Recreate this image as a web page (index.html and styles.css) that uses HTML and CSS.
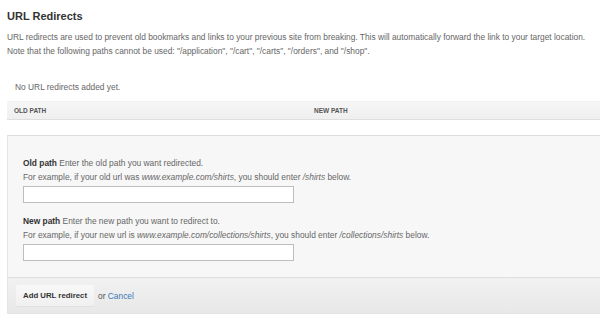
FILE: index.html
```html
<!DOCTYPE html>
<html lang="en">

<head>
  <meta charset="UTF-8">
  <title>URL Redirects</title>
  <link rel="stylesheet" href="styles.css">
</head>

<body>

  <div class="page">
    <h1>URL Redirects</h1>

    <p class="intro">
      URL redirects are used to prevent old bookmarks and links to your previous site from breaking. This will automatically forward the link to your target location.<br>
      Note that the following paths cannot be used: "/application", "/cart", "/carts", "/orders", and "/shop".
    </p>

    <p class="empty">No URL redirects added yet.</p>

    <div class="table-head">
      <span>Old path</span>
      <span>New path</span>
    </div>

    <form class="panel" id="redirectForm">
      <div class="panel-body">
        <div class="field">
          <p class="hint"><strong>Old path</strong> Enter the old path you want redirected.</p>
          <p class="hint">For example, if your old url was <em>www.example.com/shirts</em>, you should enter <em>/shirts</em> below.</p>
          <input type="text" name="old_path">
        </div>

        <div class="field">
          <p class="hint"><strong>New path</strong> Enter the new path you want to redirect to.</p>
          <p class="hint">For example, if your new url is <em>www.example.com/collections/shirts</em>, you should enter <em>/collections/shirts</em> below.</p>
          <input type="text" name="new_path">
        </div>
      </div>

      <div class="panel-foot">
        <button type="submit">Add URL redirect</button>
        <span class="or">or <a href="#">Cancel</a></span>
      </div>
    </form>
  </div>

</body>
</html>
```

FILE: styles.css
```css
body {
  margin: 0;
  background: #fff;
  font-family: 'Liberation Sans', Arial, sans-serif;
  color: #666;
  overflow: hidden;
}
.page {
  padding: 9px 0 0 7px;
}
h1 {
  margin: 0;
  font-size: 11px;
  line-height: 14px;
  color: #333;
}
p {
  margin: 0;
}
.intro {
  margin-top: 7px;
  font-size: 8.4px;
  line-height: 14px;
}
.empty {
  margin-top: 22px;
  padding-left: 8px;
  font-size: 8.4px;
  line-height: 14px;
}
.table-head {
  display: grid;
  grid-template-columns: 300px 1fr;
  margin-top: 7px;
  height: 17px;
  line-height: 18px;
  background: linear-gradient(#f6f6f6, #efefef);
  border-top: 1px solid #f0f0f0;
  border-bottom: 1px solid #dedede;
  font-size: 6.5px;
  font-weight: bold;
  text-transform: uppercase;
  color: #555;
}
.table-head span {
  padding-left: 7px;
}
.panel {
  margin: 15px 0 0;
  background: #f7f7f7;
  border-top: 1px solid #dcdcdc;
  border-left: 1px solid #e4e4e4;
  border-bottom: 1px solid #e4e4e4;
}
.panel-body {
  padding: 20px 0 16px 15px;
}
.field + .field {
  margin-top: 11px;
}
.hint {
  font-size: 8.4px;
  line-height: 14px;
}
.hint strong {
  color: #333;
}
input[type="text"] {
  display: block;
  box-sizing: border-box;
  width: 271px;
  height: 17px;
  margin-top: 2px;
  padding: 0 3px;
  border: 1px solid #bdbdbd;
  background: #fff;
}
.panel-foot {
  display: flex;
  align-items: center;
  gap: 4px;
  padding: 7px 0 7px 8px;
  border-top: 1px solid #dedede;
  background: linear-gradient(#f1f1f1, #e8e8e8);
}
button {
  height: 21px;
  padding: 0 7px;
  border: none;
  border-radius: 2px;
  background: linear-gradient(#f8f8f8, #f0f0f0);
  box-shadow: 0 1px 0 #e0e0e0;
  font-family: 'Liberation Sans', Arial, sans-serif;
  font-size: 7.8px;
  font-weight: bold;
  color: #333;
}
.or {
  font-size: 8.4px;
  color: #555;
}
.or a {
  color: #3b78b8;
  text-decoration: none;
}
```
